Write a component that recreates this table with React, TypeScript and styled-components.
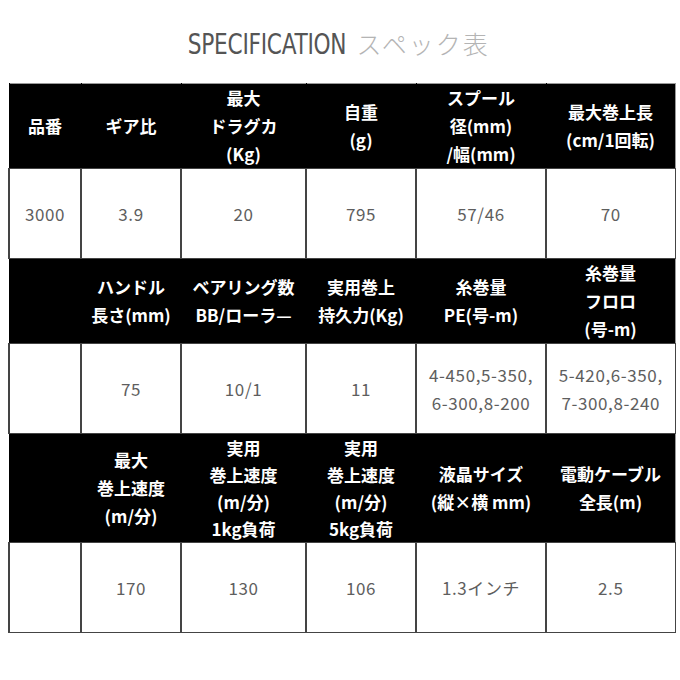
import styled, { createGlobalStyle } from 'styled-components';

type Cell = string[];

type Section = {
    heads: Cell[];
    values: Cell[];
    headHeight: number;
    valueHeight: number;
};

const sections: Section[] = [
    {
        heads: [['品番'], ['ギア比'], ['最大', 'ドラグカ', '(Kg)'], ['自重', '(g)'], ['スプール', '径(mm)', '/幅(mm)'], ['最大巻上長', '(cm/1回転)']],
        values: [['3000'], ['3.9'], ['20'], ['795'], ['57/46'], ['70']],
        headHeight: 82,
        valueHeight: 90,
    },
    {
        heads: [[], ['ハンドル', '長さ(mm)'], ['ベアリング数', 'BB/ローラ—'], ['実用巻上', '持久力(Kg)'], ['糸巻量', 'PE(号-m)'], ['糸巻量', 'フロロ', '(号-m)']],
        values: [[], ['75'], ['10/1'], ['11'], ['4-450,5-350,', '6-300,8-200'], ['5-420,6-350,', '7-300,8-240']],
        headHeight: 82,
        valueHeight: 90,
    },
    {
        heads: [[], ['最大', '巻上速度', '(m/分)'], ['実用', '巻上速度', '(m/分)', '1kg負荷'], ['実用', '巻上速度', '(m/分)', '5kg負荷'], ['液晶サイズ', '(縦×横 mm)'], ['電動ケーブル', '全長(m)']],
        values: [[], ['170'], ['130'], ['106'], ['1.3インチ'], ['2.5']],
        headHeight: 109,
        valueHeight: 90,
    },
];

const widths = [72, 100, 125, 110, 130, 129];

const App = () => {
    return (
        <Page>
            <GlobalStyle />
            <Title>
                <TitleEn>SPECIFICATION</TitleEn>
                <TitleJa>スペック表</TitleJa>
            </Title>
            <Table>
                <colgroup>
                    {widths.map((w, i) => (
                        <col key={i} style={{ width: w }} />
                    ))}
                </colgroup>
                <tbody>
                    {sections.map((s, si) => (
                        <Group key={si} section={s} />
                    ))}
                </tbody>
            </Table>
        </Page>
    );
};

const Group = ({ section }: { section: Section }) => (
    <>
        <HeadRow h={section.headHeight}>
            {section.heads.map((lines, i) => (
                <HeadCell key={i} dense={lines.length > 3}>
                    {lines.map((l, j) => (
                        <Line key={j}>{l}</Line>
                    ))}
                </HeadCell>
            ))}
        </HeadRow>
        <ValueRow h={section.valueHeight}>
            {section.values.map((lines, i) => (
                <ValueCell key={i}>
                    {lines.map((l, j) => (
                        <Line key={j}>{l}</Line>
                    ))}
                </ValueCell>
            ))}
        </ValueRow>
    </>
);

export default App;

const GlobalStyle = createGlobalStyle`
    html, body {
        margin: 0;
        padding: 0;
        background: #fff;
    }
    body {
        font-family: "Noto Sans CJK JP", "Noto Sans", sans-serif;
    }
`;

const Page = styled.div`
    width: 680px;
    height: 680px;
    padding: 25px 6px 0 8px;
    box-sizing: border-box;
`;

const Title = styled.h1`
    margin: 0 0 25px 0;
    display: flex;
    justify-content: center;
    align-items: baseline;
    gap: 10px;
    font-weight: normal;
    height: 33px;
`;

const TitleEn = styled.span`
    font-family: "Liberation Sans Narrow", "DejaVu Sans Condensed", sans-serif;
    font-size: 28px;
    color: #555;
    letter-spacing: -0.3px;
    display: inline-block;
    transform: scaleX(0.86);
    transform-origin: right center;
    margin-left: -30px;
`;

const TitleJa = styled.span`
    font-family: "Noto Sans CJK JP", sans-serif;
    font-weight: 300;
    font-size: 25px;
    color: #b4b4b4;
    letter-spacing: 2px;
`;

const Table = styled.table`
    width: 666px;
    border-collapse: collapse;
    table-layout: fixed;
    border: 1px solid #999;
`;

const HeadRow = styled.tr<{ h: number }>`
    height: ${({ h }) => h}px;
    background: #000;
`;

const ValueRow = styled.tr<{ h: number }>`
    height: ${({ h }) => h}px;
    background: #fff;
`;

const HeadCell = styled.td<{ dense?: boolean }>`
    padding: 0;
    text-align: center;
    vertical-align: middle;
    color: #fff;
    font-weight: 700;
    font-size: 17px;
    line-height: ${({ dense }) => (dense ? '27px' : '28px')};
    border-left: 1px solid #000;
`;

const ValueCell = styled.td`
    padding: 0;
    text-align: center;
    vertical-align: middle;
    color: #5e5e5e;
    font-size: 17px;
    letter-spacing: 0.6px;
    line-height: 28px;
    border: 1px solid #444;
    border-left-width: 2px;
`;

const Line = styled.div`
    white-space: nowrap;
`;
